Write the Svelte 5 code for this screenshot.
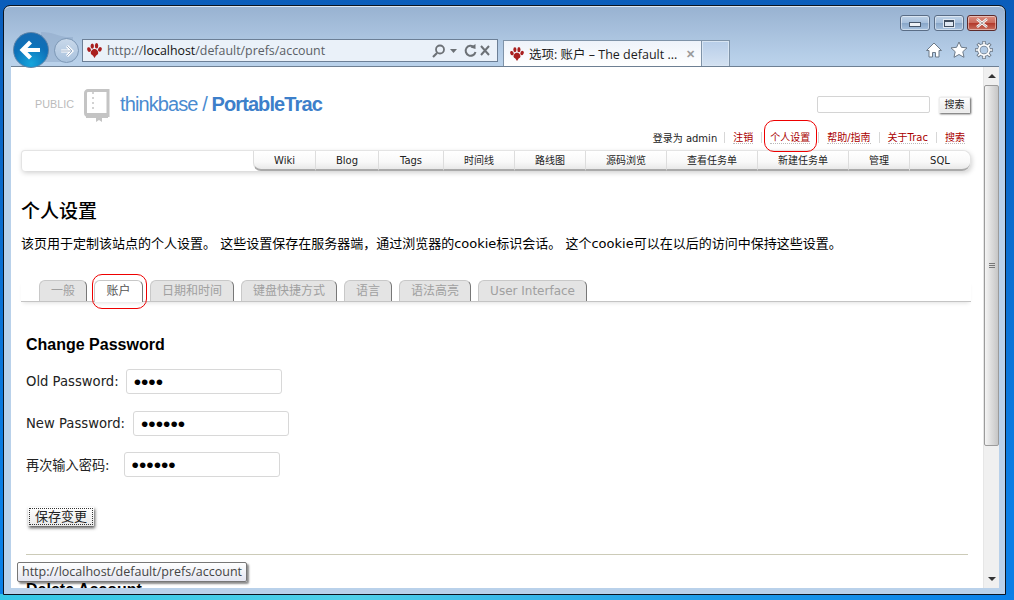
<script>
  const navItems = [
    ["Wiki", 62], ["Blog", 63], ["Tags", 65], ["时间线", 71], ["路线图", 71],
    ["源码浏览", 81], ["查看任务单", 91], ["新建任务单", 91], ["管理", 61], ["SQL", 61]
  ];
  const metaLinks = ["注销", "个人设置", "帮助/指南", "关于Trac", "搜索"];
  const prefTabs = ["一般", "账户", "日期和时间", "键盘快捷方式", "语言", "语法高亮", "User Interface"];
  const passwordRows = [
    { label: "Old Password:", value: "1234", gap: 7 },
    { label: "New Password:", value: "123456", gap: 8 },
    { label: "再次输入密码:", value: "123456", gap: 14 }
  ];
</script>

{#snippet paw(size)}
  <svg width={size} height={size} viewBox="0 0 16 16">
    <g fill="#a91f1f">
      <ellipse cx="2.2" cy="7" rx="1.9" ry="2.5" transform="rotate(-20 2.2 7)" />
      <ellipse cx="5.6" cy="3.2" rx="1.8" ry="2.8" />
      <ellipse cx="10.2" cy="3" rx="1.8" ry="2.9" />
      <ellipse cx="13.8" cy="6.8" rx="1.9" ry="2.5" transform="rotate(20 13.8 6.8)" />
      <path d="M8 6.5c2.400 0 4.300 2.500 3.900 4.700-.3 1.500-1.600 1.400-2.400 2.400L8 15.900l-1.500-2.300c-.8-1-2.100-.9-2.400-2.400C3.700 9 5.600 6.500 8 6.500z" />
    </g>
  </svg>
{/snippet}

<div class="desktop">
  <div class="window">
    <div class="titlebar">
      <div class="winbtn"><span class="min-glyph"></span></div>
      <div class="winbtn"><span class="max-glyph"></span></div>
      <div class="winbtn close">
        <svg width="14" height="10" viewBox="0 0 14 10"><path d="M2 1l10 8M12 1L2 9" stroke="#fff" stroke-width="2.6" /><path d="M2 1l10 8M12 1L2 9" stroke="#59413f" stroke-width=".5" /></svg>
      </div>
    </div>

    <div class="toolbar">
      <svg class="bridge" width="60" height="30" viewBox="0 0 60 30"><path d="M20 0c14 0 18 6 32 5v25H20z" fill="#8fa9c8" opacity=".55" /></svg>
      <div class="back">
        <svg width="36" height="36" viewBox="0 0 36 36"><path d="M9 18h18M17.500 10l-8 8 8 8" fill="none" stroke="#fff" stroke-width="4.200" /></svg>
      </div>
      <div class="forward">
        <svg width="24" height="24" viewBox="0 0 24 24"><path d="M5 12h13M12 6l6 6-6 6" fill="none" stroke="#fff" stroke-width="3.400" /><path d="M5 12h13M12 6l6 6-6 6" fill="none" stroke="#9db0c8" stroke-width="1.200" /></svg>
      </div>
      <div class="address">
        <span class="addr-paw">{@render paw(15)}</span>
        <span class="url">http://<b>localhost</b>/default/prefs/account</span>
        <svg class="addr-tools" width="60" height="16" viewBox="0 0 60 16">
          <circle cx="9" cy="6.500" r="4" fill="none" stroke="#6c7176" stroke-width="1.800" />
          <path d="M6 10l-4 4" stroke="#6c7176" stroke-width="2.200" />
          <path d="M19 6h7l-3.500 4z" fill="#6c7176" />
          <path d="M43 4a5 5 0 1 0 1.500 5" fill="none" stroke="#6c7176" stroke-width="2" />
          <path d="M39.500 4.500l5-3.500v5z" fill="#6c7176" />
          <path d="M50 3l8 9M58 3l-8 9" stroke="#6c7176" stroke-width="2" />
        </svg>
      </div>
      <div class="tab">
        {@render paw(14)}
        <span class="tab-title">选项: 账户 – The default ...</span>
        <span class="tab-x">✕</span>
      </div>
      <div class="newtab"></div>
      <div class="tools">
        <svg width="18" height="18" viewBox="0 0 18 18"><path d="M9 2L1.500 9.500h2.500V16h3.500v-4.500h3V16H14V9.500h2.500z" fill="#fff" stroke="#6d7a88" stroke-width="1" /></svg>
        <svg width="18" height="18" viewBox="0 0 18 18"><path d="M9 1l2.400 5.300 5.600.6-4.200 3.800 1.200 5.600L9 13.500l-5 2.800 1.200-5.600L1 6.900l5.600-.6z" fill="#fff" stroke="#6d7a88" stroke-width="1" /></svg>
        <svg width="18" height="18" viewBox="0 0 18 18"><circle cx="9" cy="9" r="5.200" fill="none" stroke="#6d7a88" stroke-width="3.200" /><circle cx="9" cy="9" r="5.200" fill="none" stroke="#fff" stroke-width="1.800" /><g stroke="#6d7a88" stroke-width="3.400"><path d="M9 0v3M9 15v3M0 9h3M15 9h3M2.600 2.600l2 2M13.400 13.400l2 2M15.400 2.600l-2 2M4.600 13.400l-2 2" /></g><g stroke="#fff" stroke-width="1.600"><path d="M9 .8v3M9 14.200v3M.8 9h3M14.200 9h3M3.200 3.200l2 2M12.800 12.800l2 2M14.800 3.200l-2 2M5.200 12.800l-2 2" /></g></svg>
      </div>
    </div>

    <div class="viewport">
      <div class="page">
        <div class="banner">
          <span class="public">PUBLIC</span>
          <svg class="book" width="26" height="34" viewBox="0 0 26 34">
            <path d="M4 1.500h20v25H4a2.500 2.500 0 0 1-2.500-2.500V4A2.500 2.500 0 0 1 4 1.500z" fill="none" stroke="#c4c4c4" stroke-width="3" />
            <path d="M9 3v19" stroke="#c4c4c4" stroke-width="1.500" stroke-dasharray="2 3" />
            <path d="M2 24h22v5H18v4l-3-2-3 2v-4H2z" fill="#c4c4c4" />
          </svg>
          <span class="project">thinkbase / <b>PortableTrac</b></span>
          <div class="search">
            <input class="search-box" type="text" />
            <button class="btn search-btn">搜索</button>
          </div>
        </div>

        <div class="metanav">
          <span class="who">登录为 admin</span>
          {#each metaLinks as link}
            <span class="meta-item"><a href="#top">{link}</a></span>
          {/each}
        </div>

        <div class="mainnav">
          {#each navItems as [name, w]}
            <div class="nav-item" style="width: {w}px">{name}</div>
          {/each}
        </div>

        <h1>个人设置</h1>
        <p class="intro">该页用于定制该站点的个人设置。 这些设置保存在服务器端，通过浏览器的cookie标识会话。 这个cookie可以在以后的访问中保持这些设置。</p>

        <div class="tabs">
          {#each prefTabs as t, i}
            <div class="pref-tab" class:active={i === 1}>{t}</div>
          {/each}
        </div>

        <h2>Change Password</h2>
        {#each passwordRows as row}
          <div class="field" style="gap: {row.gap}px">
            <label for={row.label}>{row.label}</label>
            <input id={row.label} type="password" value={row.value} />
          </div>
        {/each}
        <button class="btn save">保存变更</button>
        <hr />
        <h2 class="delete">Delete Account</h2>
      </div>

      <div class="scrollbar">
        <div class="arrow up"></div>
        <div class="thumb"><span class="grip"></span></div>
        <div class="track"></div>
        <div class="arrow down"></div>
      </div>

      <div class="mark mark-prefs"></div>
      <div class="mark mark-tab"></div>
      <div class="tooltip">http://localhost/default/prefs/account</div>
    </div>
  </div>
</div>

<style>
  :global(body) {
    margin: 0;
  }
  .desktop {
    width: 1014px;
    height: 600px;
    overflow: hidden;
    padding: 5px 0 0 3px;
    box-sizing: border-box;
    background:
      linear-gradient(100deg, #35c7e6 0, #4fcfe8 35%, #1e9be8 70%, #0a80e8 100%) bottom / 100% 6px no-repeat,
      linear-gradient(#0a5dbb, #0a7fe6 85%);
    font-family: "DejaVu Sans", "Noto Sans CJK SC", sans-serif;
  }
  .window {
    width: 1003px;
    height: 590px;
    box-sizing: border-box;
    border: 1px solid #0c1520;
    border-radius: 7px 7px 0 0;
    padding: 0 6px 6px 7px;
    background: linear-gradient(#98b2d1, #b9d1ea 55px);
    display: flex;
    flex-direction: column;
    box-shadow: inset 0 1px 0 #dfe9f4;
  }
  .titlebar {
    height: 32px;
    box-sizing: border-box;
    padding: 9px 2px 0 0;
    display: flex;
    justify-content: flex-end;
    gap: 3.500px;
  }
  .winbtn {
    width: 30px;
    height: 16px;
    box-sizing: border-box;
    border: 1px solid #5a6d86;
    border-radius: 3px;
    background: linear-gradient(#bed2e8, #a6bfdb 50%, #88a6c8 52%, #a9c3df);
    display: flex;
    align-items: center;
    justify-content: center;
    box-shadow: inset 0 0 0 1px rgba(255, 255, 255, .45);
  }
  .winbtn.close {
    border-color: #5c2a2a;
    background: linear-gradient(#dc8d7f, #c9695a 50%, #b2392b 52%, #c8705f);
  }
  .min-glyph {
    width: 10px;
    height: 3px;
    margin-top: 3px;
    background: #eef2f7;
    border: 1px solid #46566a;
  }
  .max-glyph {
    width: 8px;
    height: 4px;
    border: 1px solid #3f4d5e;
    border-top-width: 2px;
    background: #dfe8f2;
    outline: 1px solid #dfe8f2;
  }
  .toolbar {
    height: 28px;
    display: flex;
    align-items: flex-end;
    position: relative;
    flex: none;
  }
  .bridge {
    position: absolute;
    left: 10px;
    top: -6px;
  }
  .back {
    position: absolute;
    left: 2px;
    top: -6px;
    width: 36px;
    height: 36px;
    box-sizing: border-box;
    border: 1px solid #5c83a8;
    border-radius: 50%;
    background: radial-gradient(circle at 50% 90%, #16a5dc, #0d70b8 55%, #1a6ab0);
    display: flex;
    align-items: center;
    justify-content: center;
    z-index: 2;
  }
  .back svg {
    margin: -1px;
  }
  .forward {
    position: absolute;
    left: 43px;
    top: 0;
    width: 25px;
    height: 25px;
    box-sizing: border-box;
    border: 1px solid #7d98b6;
    border-radius: 50%;
    background: linear-gradient(#c8d8ea, #a9c2dd);
    display: flex;
    align-items: center;
    justify-content: center;
  }
  .forward svg {
    width: 20px;
    height: 20px;
  }
  .address {
    margin: 0 5px 4px 71px;
    width: 416px;
    height: 23px;
    box-sizing: border-box;
    border: 1px solid #6c7f96;
    background: #eaf1f9;
    display: flex;
    align-items: center;
    padding: 0 6px 0 4px;
    font-size: 12.400px;
    color: #5a5f66;
    font-family: "Open Sans", "DejaVu Sans", sans-serif;
  }
  .addr-paw {
    display: flex;
    margin-right: 5px;
  }
  .url b {
    font-weight: 400;
    color: #111;
  }
  .addr-tools {
    margin-left: auto;
  }
  .tab {
    width: 199px;
    height: 26px;
    box-sizing: border-box;
    border: 1px solid #7f93a8;
    border-bottom: 0;
    background: linear-gradient(#eef3fa, #fff);
    display: flex;
    align-items: center;
    padding: 0 6px 0 6px;
    gap: 5px;
    font-size: 12.500px;
    color: #1c1c1c;
    font-family: "Open Sans", "Noto Sans CJK SC", sans-serif;
  }
  .tab-title {
    white-space: nowrap;
  }
  .tab-x {
    margin-left: auto;
    color: #9a9a9a;
    font-weight: 700;
    font-size: 11px;
  }
  .newtab {
    width: 28px;
    height: 26px;
    box-sizing: border-box;
    border: 1px solid #7f93a8;
    border-left: 0;
    border-bottom: 0;
    background: linear-gradient(#b7cde8, #d3e1f1);
    box-shadow: inset 0 0 0 1px #d8e5f3;
  }
  .tools {
    margin-left: auto;
    margin-right: 6px;
    height: 26px;
    display: flex;
    gap: 7px;
    margin-bottom: 3px;
    align-items: center;
  }
  .viewport {
    height: 522px;
    flex: none;
    display: flex;
    position: relative;
    background: #fff;
    border-top: 1px solid #6d7f93;
    overflow: hidden;
    width: 988px;
    box-sizing: border-box;
  }
  .page {
    width: 972px;
    flex: none;
    box-sizing: border-box;
    padding: 0 12px 0 10px;
    height: 521px;
    overflow: hidden;
    color: #000;
  }
  .banner {
    height: 53px;
    display: flex;
    align-items: center;
    padding-left: 14px;
    margin-top: 9px;
  }
  .public {
    font: 10.800px "Liberation Sans", sans-serif;
    color: #bbb;
    width: 49px;
    margin-top: 3px;
  }
  .book {
    flex: none;
    margin-top: 6px;
    margin-right: 10px;
  }
  .project {
    font: 20px "Liberation Sans", sans-serif;
    letter-spacing: -.9px;
    color: #4a8bd0;
    white-space: nowrap;
    margin-top: 3px;
  }
  .project b {
    font-size: 20px;
    color: #3d7fca;
  }
  .search {
    margin-left: auto;
    margin-right: 1px;
    display: flex;
    gap: 9px;
    align-items: center;
    margin-top: 4px;
  }
  .search-box {
    width: 113px;
    height: 17px;
    box-sizing: border-box;
    border: 1px solid #d4d4d4;
    border-radius: 2px;
    padding: 0;
  }
  .btn {
    font-family: "DejaVu Sans", "Noto Sans CJK SC", sans-serif;
    padding: 0;
    border: 0;
    background: linear-gradient(#fff, #e9e9e9);
    color: #222;
    box-shadow: 1px 1px 2px #555, inset 0 0 0 1px #eee;
  }
  .search-btn {
    width: 31px;
    height: 16px;
    font-size: 10px;
    line-height: 16px;
  }
  .metanav {
    display: flex;
    justify-content: flex-end;
    align-items: center;
    height: 14px;
    margin: 1px 6px 0 0;
    font-size: 10px;
    white-space: nowrap;
  }
  .who {
    padding-right: 7px;
    color: #222;
  }
  .meta-item {
    border-left: 1px solid #d7d7d7;
    padding: 0 8px;
    height: 11px;
    line-height: 11px;
  }
  .meta-item:last-child {
    padding-right: 0;
  }
  .meta-item a {
    color: #a00;
    text-decoration: none;
    border-bottom: 1px dotted #bbb;
  }
  .mainnav {
    margin-top: 6px;
    height: 21px;
    box-sizing: border-box;
    border: 1px solid #e4e4e4;
    border-bottom: 0;
    border-radius: 4px 8px 8px 4px;
    display: flex;
    justify-content: flex-end;
    box-shadow: 1px 2px 5px rgba(0, 0, 0, .18);
    background: #fff;
  }
  .nav-item {
    flex: none;
    box-sizing: border-box;
    height: 20px;
    border-left: 1px solid #ddd;
    border-bottom: 2px solid #aaa;
    background: linear-gradient(#fff, #f9f9f9 60%, #e9e9e9);
    font-size: 10px;
    line-height: 20px;
    text-align: center;
    color: #222;
  }
  .nav-item:first-child {
    border-radius: 0 0 0 8px;
  }
  .nav-item:last-child {
    border-radius: 0 8px 8px 0;
  }
  h1 {
    font-size: 19px;
    font-weight: 500;
    line-height: 22px;
    margin: 29px 0 0;
  }
  .intro {
    font-size: 13px;
    line-height: 16px;
    margin: 14px 0 0;
    white-space: nowrap;
  }
  .tabs {
    margin-top: 28px;
    height: 22px;
    box-sizing: border-box;
    border-bottom: 1px solid #c4c4c4;
    display: flex;
    gap: 7px;
    padding-left: 18px;
    box-shadow: 0 3px 4px -2px rgba(0, 0, 0, .12);
  }
  .pref-tab {
    height: 21px;
    box-sizing: border-box;
    border: 1px solid #c8c8c8;
    border-bottom: 0;
    border-right: 1px solid #777;
    border-radius: 6px 6px 0 0;
    background: #e4e4e4;
    color: #a0a0a0;
    font-size: 12px;
    line-height: 20px;
    padding: 0 11px;
  }
  .pref-tab.active {
    height: 22px;
    background: #fff;
    color: #555;
    margin-bottom: -1px;
    padding: 0 11.500px;
  }
  h2 {
    font: 700 16px/20px "Liberation Sans", sans-serif;
    margin: 33px 0 0 5px;
  }
  .field {
    display: flex;
    align-items: center;
    margin: 14px 0 0 5px;
    font-size: 13.200px;
    height: 25px;
    color: #222;
  }
  .field + .field {
    margin-top: 17px;
  }
  .field + .field + .field {
    margin-top: 16px;
  }
  .field input {
    width: 156px;
    height: 25px;
    box-sizing: border-box;
    border: 1px solid #d8d8d8;
    border-radius: 3px;
    padding: 0 7px;
    font-size: 21px;
    font-family: "Liberation Sans", sans-serif;
    outline: none;
  }
  .save {
    display: block;
    width: 66px;
    height: 19px;
    margin: 30px 0 0 7px;
    font-size: 13px;
    line-height: 17px;
    box-shadow: 1px 2px 3px #555;
    outline: 1px dotted #333;
    outline-offset: -2px;
  }
  hr {
    border: 0;
    height: 1px;
    background: #cccbb8;
    margin: 28px 3px 0 5px;
  }
  .delete {
    margin-top: 25px;
  }
  .scrollbar {
    width: 16px;
    flex: none;
    display: flex;
    flex-direction: column;
    background: #f0f0f0;
    border-left: 1px solid #e6e6e6;
    box-sizing: border-box;
  }
  .arrow {
    height: 18px;
    flex: none;
    display: flex;
    align-items: center;
    justify-content: center;
  }
  .arrow::after {
    content: "";
    border-left: 4px solid transparent;
    border-right: 4px solid transparent;
  }
  .arrow.up::after {
    border-bottom: 4px solid #333;
  }
  .arrow.down::after {
    border-top: 4px solid #333;
  }
  .thumb {
    height: 361px;
    flex: none;
    box-sizing: border-box;
    border: 1px solid #9b9b9b;
    border-radius: 2px;
    background: linear-gradient(to right, #f4f4f4, #dcdcdc 50%, #c6c6c6);
    display: flex;
    align-items: center;
    justify-content: center;
  }
  .grip {
    width: 6px;
    height: 6px;
    background: repeating-linear-gradient(#777 0 1px, transparent 1px 2px);
  }
  .track {
    flex: 1;
  }
  .mark {
    position: absolute;
    border: 1px solid #e00;
    box-sizing: border-box;
    border-radius: 10px;
  }
  .mark-prefs {
    left: 753px;
    top: 53px;
    width: 53px;
    height: 32px;
  }
  .mark-tab {
    left: 81px;
    top: 207px;
    width: 55px;
    height: 35px;
  }
  .tooltip {
    position: absolute;
    left: 6px;
    top: 495px;
    width: 230px;
    height: 20px;
    box-sizing: border-box;
    border: 1px solid #777;
    border-radius: 2px;
    background: linear-gradient(#fff, #e4e5f0);
    font: 12.500px/18px "Open Sans", sans-serif;
    color: #444;
    padding-left: 4px;
    box-shadow: 2px 2px 2px rgba(0, 0, 0, .45);
    white-space: nowrap;
  }
</style>
